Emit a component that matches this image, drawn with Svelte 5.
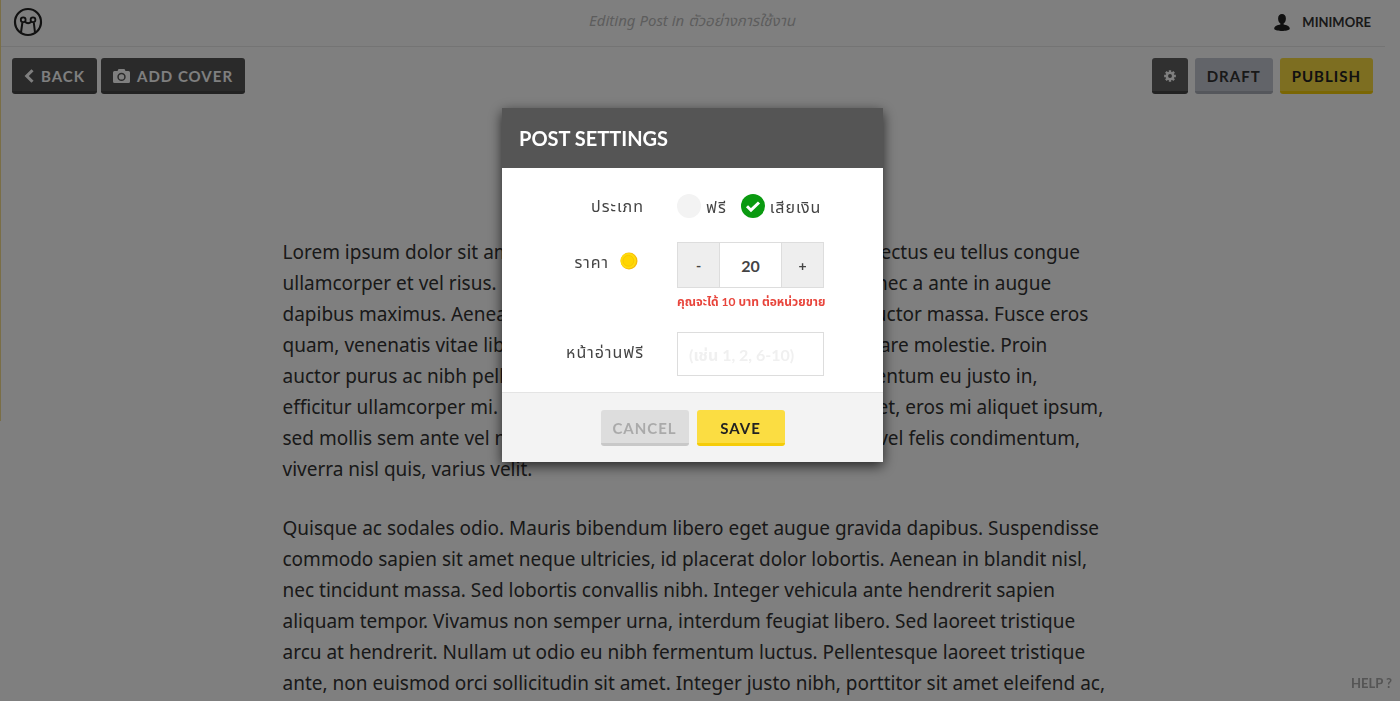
<script>
  const paragraphs = [
    [
      "Lorem ipsum dolor sit amet, consectetur adipiscing elit. Duis nulla lectus eu tellus congue",
      "ullamcorper et vel risus. Nullam tempus nibh quis erat pretium, donec a ante in augue",
      "dapibus maximus. Aenean id ligula sed nisi aliquam tristique sed auctor massa. Fusce eros",
      "quam, venenatis vitae libero at, dictum luctus nisl faucibus erat ornare molestie. Proin",
      "auctor purus ac nibh pellentesque, a mattis elit vulputate sed fermentum eu justo in,",
      "efficitur ullamcorper mi. Praesent in magna vulputate mauris laoreet, eros mi aliquet ipsum,",
      "sed mollis sem ante vel nunc. Aliquam tincidunt vulputate erat nisl vel felis condimentum,",
      "viverra nisl quis, varius velit.",
    ],
    [
      "Quisque ac sodales odio. Mauris bibendum libero eget augue gravida dapibus. Suspendisse",
      "commodo sapien sit amet neque ultricies, id placerat dolor lobortis. Aenean in blandit nisl,",
      "nec tincidunt massa. Sed lobortis convallis nibh. Integer vehicula ante hendrerit sapien",
      "aliquam tempor. Vivamus non semper urna, interdum feugiat libero. Sed laoreet tristique",
      "arcu at hendrerit. Nullam ut odio eu nibh fermentum luctus. Pellentesque laoreet tristique",
      "ante, non euismod orci sollicitudin sit amet. Integer justo nibh, porttitor sit amet eleifend ac,",
    ],
  ];

  const types = [
    { value: "free", label: "ฟรี" },
    { value: "paid", label: "เสียเงิน" },
  ];

  let type = $state("paid");
  let price = $state(20);
  let freePages = $state("");
</script>

<div class="page">
  <header class="topbar">
    <a class="logo" href="/" aria-label="Minimore">
      <svg width="30" height="30" viewBox="0 0 30 30" fill="none" stroke="#222">
        <circle cx="15" cy="15" r="13" stroke-width="2.2" />
        <circle cx="10.2" cy="12.8" r="2.400" stroke-width="1.800" />
        <circle cx="20" cy="12.8" r="2.400" stroke-width="1.800" />
        <path d="M9.400 15.500 8 25.500M20.800 15.500 22 25.500M11.800 14.800q3.300 2.800 6.600 0" stroke-width="2" />
      </svg>
    </a>
    <em class="editing">Editing Post in ตัวอย่างการใช้งาน</em>
    <a class="user" href="/minimore">
      <svg width="16" height="17" viewBox="0 0 16 17" fill="#222">
        <path d="M8 0c2.400 0 3.900 1.800 3.900 4.400 0 2.300-1 4.300-2.300 5.200v1c2.600.5 6.200 1.500 6.200 4.200C15.800 16.300 11 17 8 17S.2 16.300.2 14.800c0-2.700 3.600-3.700 6.200-4.200v-1C5.100 8.700 4.100 6.700 4.100 4.400 4.100 1.800 5.600 0 8 0z" />
      </svg>
      MINIMORE
    </a>
  </header>

  <div class="toolbar">
    <button class="btn dark">
      <svg width="10" height="14" viewBox="0 0 10 14" fill="none" stroke="currentColor" stroke-width="3">
        <path d="M8.500 1.200 2.700 7l5.800 5.800" />
      </svg>
      BACK
    </button>
    <button class="btn dark">
      <svg width="17" height="14" viewBox="0 0 17 14" fill="currentColor" fill-rule="evenodd">
        <path d="M5.500 0h6l1 2H15.500q1.500 0 1.500 1.500v9q0 1.500-1.500 1.500h-14Q0 14 0 12.500v-9Q0 2 1.500 2h3zM8.500 3.700a4.200 4.200 0 1 0 0 8.400 4.200 4.200 0 0 0 0-8.400zm0 1.500a2.700 2.700 0 1 1 0 5.400 2.700 2.700 0 0 1 0-5.400z" />
      </svg>
      ADD COVER
    </button>
    <span class="spacer"></span>
    <button class="btn dark gear" aria-label="Settings">
      <svg width="14" height="14" viewBox="-7 -7 14 14" fill="none" stroke="currentColor">
        <circle r="3.700" stroke-width="2.800" />
        {#each [0, 45, 90, 135] as angle}
          <path d="M0-6.800v2.600M0 4.200v2.600" stroke-width="2.800" transform="rotate({angle})" />
        {/each}
      </svg>
    </button>
    <button class="btn draft">DRAFT</button>
    <button class="btn yellow">PUBLISH</button>
  </div>

  <article>
    {#each paragraphs as lines}
      <p>
        {#each lines as line}{line}<br />{/each}
      </p>
    {/each}
  </article>

  <a class="help" href="/help">HELP ?</a>
  <div class="edge"></div>
</div>

<div class="overlay">
  <form class="modal" onsubmit={(e) => e.preventDefault()}>
    <h2>POST SETTINGS</h2>

    <div class="fields">
      <span class="label" id="type-label">ประเภท</span>
      <div class="types" role="radiogroup" aria-labelledby="type-label">
        {#each types as t}
          <label class="radio">
            <input type="radio" name="type" value={t.value} bind:group={type} />
            {#if type === t.value}
              <svg class="tick" width="24" height="24" viewBox="0 0 24 24" fill="none" stroke="#fff" stroke-width="3">
                <path d="m6 12.200 4 4 8-7.700" />
              </svg>
            {/if}
            <span>{t.label}</span>
          </label>
        {/each}
      </div>

      <label class="label" for="price">
        ราคา
        <svg class="coin" width="18" height="18" viewBox="0 0 18 18">
          <circle cx="9" cy="9" r="8.500" fill="#f5b90a" />
          <circle cx="8.400" cy="8.800" r="7.800" fill="#ffdb0d" />
          <circle cx="8.400" cy="8.800" r="5.400" fill="#ffd500" stroke="#f8c800" />
        </svg>
      </label>
      <div>
        <div class="stepper">
          <button type="button" onclick={() => (price -= 1)}>-</button>
          <input id="price" type="text" bind:value={price} />
          <button type="button" onclick={() => (price += 1)}>+</button>
        </div>
        <p class="note">คุณจะได้ 10 บาท ต่อหน่วยขาย</p>
      </div>

      <label class="label" for="free-pages">หน้าอ่านฟรี</label>
      <input id="free-pages" class="text" type="text" placeholder="(เช่น 1, 2, 6-10)" bind:value={freePages} />
    </div>

    <footer>
      <button type="button" class="btn cancel">CANCEL</button>
      <button class="btn save">SAVE</button>
    </footer>
  </form>
</div>

<style>
  :global(body) {
    background: #fff;
    font-family: Lato, "Noto Sans Thai", "Noto Sans", sans-serif;
    overflow: hidden;
  }

  .page {
    height: 100vh;
    overflow: hidden;
    padding-right: 15px;
    box-sizing: border-box;
  }

  .topbar {
    display: grid;
    grid-template-columns: 1fr auto 1fr;
    align-items: center;
    height: 47px;
    padding: 0 14px 0 13px;
    box-sizing: border-box;
    border-bottom: 1px solid #e8e8e8;
  }

  .logo {
    display: flex;
    padding-bottom: 3px;
  }

  .editing {
    font: italic 15px "Noto Sans", "Noto Sans Thai", sans-serif;
    color: #bbb;
    padding-bottom: 4px;
  }

  .user {
    display: flex;
    align-items: center;
    justify-content: flex-end;
    gap: 12px;
    padding-bottom: 2px;
    font-size: 13px;
    font-weight: bold;
    color: #333;
    text-decoration: none;
  }

  .toolbar {
    display: flex;
    gap: 7px;
    padding: 11px 12px 0;
  }

  .btn {
    display: flex;
    align-items: center;
    justify-content: center;
    gap: 7px;
    height: 36px;
    padding: 2px 12px 0;
    border: 0;
    border-bottom: 3px solid;
    border-radius: 3px;
    font: bold 15px Lato, sans-serif;
    letter-spacing: 1px;
    cursor: pointer;
  }

  .dark {
    background: #555;
    border-color: #444;
    color: #fff;
  }

  .dark + .dark {
    margin-left: -3px;
  }

  .gear {
    width: 36px;
    background: #606060;
  }

  .draft {
    background: #c4c8d2;
    border-color: #aaaeb8;
    color: #333;
  }

  .yellow,
  .save {
    background: #fbdd42;
    border-color: #f5cc08;
    color: #222;
  }

  .cancel {
    background: #ddd;
    border-color: #c8c8c8;
    color: #aaa;
  }

  .cancel,
  .save {
    width: 88px;
  }

  article {
    width: 820px;
    margin: 143px auto 0;
    font: 19px "Droid Sans", "Noto Sans", sans-serif;
    line-height: 31px;
    color: #333;
    white-space: nowrap;
  }

  article p {
    margin: 0 0 28px;
  }

  .help {
    position: fixed;
    right: 8px;
    bottom: 10px;
    font-size: 13px;
    font-weight: bold;
    color: #aaa;
    text-decoration: none;
  }

  .edge {
    position: fixed;
    top: 0;
    left: 0;
    width: 1px;
    height: 60%;
    background: #f5dc8c;
  }

  .spacer {
    flex: 1;
  }

  .overlay {
    position: fixed;
    inset: 0;
    display: flex;
    align-items: flex-start;
    justify-content: center;
    padding: 108px 15px 0 0;
    background: rgba(0, 0, 0, 0.5);
  }

  .modal {
    width: 381px;
    background: #fff;
    box-shadow: 0 4px 12px rgba(0, 0, 0, 0.7);
    color: #444;
  }

  h2 {
    margin: 0;
    padding: 0 17px;
    background: #555;
    color: #fff;
    font-size: 20px;
    line-height: 60px;
  }

  .fields {
    display: grid;
    grid-template-columns: 142px 147px;
    column-gap: 33px;
    row-gap: 22px;
    padding: 26px 0 16px;
    font-size: 16px;
  }

  .label {
    display: flex;
    align-items: flex-start;
    justify-content: flex-end;
    line-height: 24px;
    letter-spacing: 1px;
  }

  .label[for] {
    padding-top: 8px;
  }

  .coin {
    margin: 2px 6px 0 11px;
  }

  .types {
    display: flex;
    align-items: flex-start;
    gap: 14px;
    height: 26px;
    white-space: nowrap;
  }

  .radio {
    position: relative;
    display: flex;
    align-items: center;
    gap: 5px;
    height: 24px;
    letter-spacing: 1px;
  }

  .radio span {
    padding-top: 3px;
  }

  .radio input {
    appearance: none;
    width: 24px;
    height: 24px;
    margin: 0;
    border-radius: 50%;
    background: #f3f3f3;
  }

  .radio input:checked {
    background: #0a9a10;
  }

  .tick {
    position: absolute;
    left: 0;
    top: 0;
  }

  .stepper {
    display: flex;
    height: 46px;
    box-sizing: border-box;
    border: 1px solid #ddd;
  }

  .stepper button {
    width: 41px;
    border: 0;
    background: #eee;
    color: #444;
    font: bold 14px Lato, sans-serif;
  }

  .stepper input {
    flex: 1;
    min-width: 0;
    padding: 0;
    border: solid #ddd;
    border-width: 0 1px;
    color: #444;
    font: bold 16px Lato, sans-serif;
    text-align: center;
  }

  .note {
    margin: 6px 0 0;
    color: #e8453c;
    font-size: 12px;
    font-weight: bold;
    line-height: 16px;
    white-space: nowrap;
  }

  .text {
    height: 44px;
    padding: 0 11px;
    box-sizing: border-box;
    min-width: 0;
    border: 1px solid #ddd;
    font: bold 16px Lato, "Noto Sans Thai", sans-serif;
  }

  .text::placeholder {
    color: #f0f0f0;
  }

  footer {
    display: flex;
    justify-content: center;
    gap: 8px;
    padding: 17px 0 16px;
    border-top: 1px solid #e4e4e4;
    background: #f3f3f3;
  }
</style>
